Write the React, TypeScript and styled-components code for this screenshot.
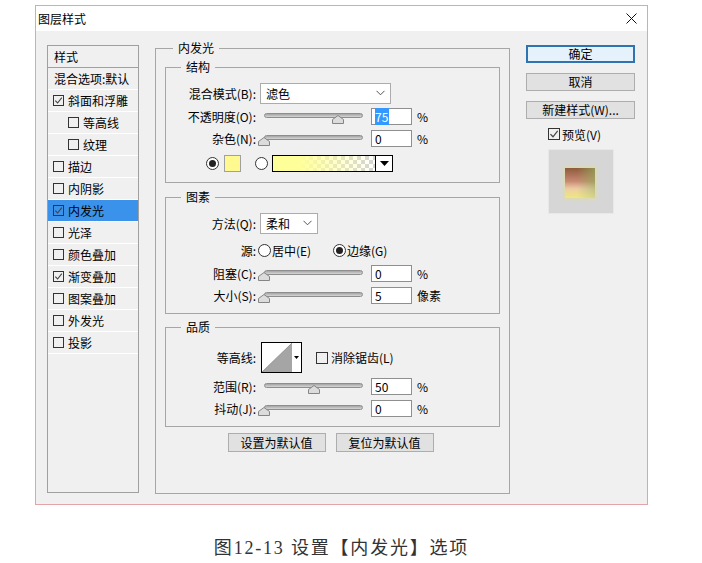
import React from "react";
import styled, { createGlobalStyle, css } from "styled-components";

const Global = createGlobalStyle`
  html, body { margin: 0; padding: 0; background: #fff; }
  body {
    font-family: "Noto Sans CJK SC", "Microsoft YaHei", sans-serif;
    font-size: 12px;
    color: #000;
  }
`;

const Page = styled.div`
  padding: 5px 0 0 35px;
  width: 613px;
`;

const Dialog = styled.div`
  width: 613px;
  height: 500px;
  box-sizing: border-box;
  border: 1px solid #e2a4a8;
  background: #f0f0f0;
  display: flex;
  flex-direction: column;
`;

const TitleBar = styled.div`
  height: 25px;
  flex: none;
  background: #fff;
  display: flex;
  align-items: center;
  justify-content: space-between;
  padding: 0 10px 0 2px;
`;

const TitleText = styled.span`
  font-size: 12px;
  line-height: 14px;
`;

const Body = styled.div`
  flex: 1;
  display: flex;
  align-items: flex-start;
  padding: 10px 0 0 11px;
`;

const StyleList = styled.div`
  flex: none;
  margin-top: 4px;
  width: 92px;
  height: 448px;
  box-sizing: border-box;
  border: 1px solid #a0a0a0;
`;

const ListItem = styled.div<{ $indent?: boolean; $selected?: boolean; $header?: boolean; $plain?: boolean }>`
  height: 22px;
  box-sizing: border-box;
  display: flex;
  align-items: center;
  gap: 4px;
  white-space: nowrap;
  border-bottom: 1px solid ${(p) => (p.$header ? "#a0a0a0" : "#ffffff")};
  padding-left: ${(p) => (p.$indent ? 20 : p.$header || p.$plain ? 6 : 5)}px;
  background: ${(p) => (p.$selected ? "#3a92ea" : "transparent")};
`;

const CheckBox = styled.span<{ $size?: number }>`
  flex: none;
  width: ${(p) => p.$size ?? 11}px;
  height: ${(p) => p.$size ?? 11}px;
  box-sizing: border-box;
  border: 1px solid #333;
  background: transparent;
  display: flex;
  align-items: center;
  justify-content: center;
`;

const Middle = styled.div`
  flex: none;
  margin-left: 16px;
  width: 355px;
`;

const Group = styled.fieldset<{ $outer?: boolean; $mt?: number }>`
  margin: ${(p) => (p.$outer ? "0" : `${p.$mt ?? 0}px 9px 0 9px`)};
  padding: ${(p) => (p.$outer ? "5px 0 0 0" : "8px 0 7px 0")};
  border: 1px solid #a6a6a6;
  min-inline-size: 0;
  box-sizing: border-box;
  ${(p) =>
    p.$outer &&
    css`
      height: 453px;
    `}
`;

const Legend = styled.legend<{ $outer?: boolean }>`
  margin-left: ${(p) => (p.$outer ? 17 : 15)}px;
  padding: 0 5px;
  font-size: 12px;
  line-height: 14px;
`;

const Row = styled.div<{ $h: number; $mt?: number; $pl?: number }>`
  height: ${(p) => p.$h}px;
  margin-top: ${(p) => p.$mt ?? 0}px;
  padding-left: ${(p) => p.$pl ?? 0}px;
  display: flex;
  align-items: center;
  white-space: nowrap;
`;

const Label = styled.span`
  flex: none;
  width: 90px;
  text-align: right;
`;

const Combo = styled.div<{ $w: number }>`
  flex: none;
  margin-left: 4px;
  width: ${(p) => p.$w}px;
  height: 21px;
  box-sizing: border-box;
  border: 1px solid #acacac;
  background: #fff;
  display: flex;
  align-items: center;
  justify-content: space-between;
  padding: 0 5px 0 5px;
`;

const SliderBox = styled.div`
  position: relative;
  flex: none;
  margin-left: 8px;
  margin-top: 5px;
  width: 99px;
  height: 11px;
`;

const Track = styled.div`
  height: 5px;
  box-sizing: border-box;
  border-radius: 3px;
  border: 1px solid #8e8e8e;
  background: linear-gradient(#a4a4a4, #d6d6d6);
`;

const Thumb = styled.svg`
  position: absolute;
  top: 2px;
`;

const NumBox = styled.div`
  flex: none;
  margin-left: 8px;
  width: 41px;
  height: 17px;
  box-sizing: border-box;
  border: 1px solid #8f8f8f;
  background: #fff;
  display: flex;
  align-items: center;
  padding-left: 3px;
`;

const Selected = styled.span`
  background: #3399ff;
  color: #fff;
  padding: 0 1px 0 0;
`;

const Unit = styled.span`
  margin-left: 5px;
`;

const Radio = styled.span<{ $on?: boolean; $ml?: number }>`
  flex: none;
  margin-left: ${(p) => p.$ml ?? 0}px;
  width: 13px;
  height: 13px;
  box-sizing: border-box;
  border: 1px solid #333;
  border-radius: 50%;
  background: #fff;
  display: flex;
  align-items: center;
  justify-content: center;
  &::after {
    content: "";
    display: ${(p) => (p.$on ? "block" : "none")};
    width: 7px;
    height: 7px;
    border-radius: 50%;
    background: #222;
  }
`;

const RadioOption = styled.span<{ $w?: number; $ml?: number }>`
  display: flex;
  align-items: center;
  gap: 1px;
  margin-left: ${(p) => p.$ml ?? 0}px;
  width: ${(p) => (p.$w ? `${p.$w}px` : "auto")};
`;

const Swatch = styled.span`
  flex: none;
  margin-left: 5px;
  width: 17px;
  height: 17px;
  box-sizing: border-box;
  border: 1px solid #a0a0a0;
  background: #fff98f;
`;

const GradientPicker = styled.div`
  flex: none;
  margin-left: 4px;
  width: 121px;
  height: 17px;
  box-sizing: border-box;
  border: 1px solid #000;
  display: flex;
`;

const GradientFill = styled.div`
  flex: 1;
  background-color: #fff;
  background-image: linear-gradient(to right, #ffff99 0%, #ffff99 25%, rgba(255, 255, 153, 0) 100%),
    linear-gradient(45deg, #d4d4d4 25%, transparent 25%, transparent 75%, #d4d4d4 75%),
    linear-gradient(45deg, #d4d4d4 25%, transparent 25%, transparent 75%, #d4d4d4 75%);
  background-size: 100% 100%, 8px 8px, 8px 8px;
  background-position: 0 0, 0 0, 4px 4px;
`;

const DropPart = styled.div`
  flex: none;
  width: 16px;
  border-left: 1px solid #000;
  background: #fff;
  display: flex;
  align-items: center;
  justify-content: center;
`;

const ContourPicker = styled.div`
  flex: none;
  margin-left: 5px;
  width: 41px;
  height: 31px;
  box-sizing: border-box;
  border: 1px solid #000;
  background: #fff;
  display: flex;
`;

const ContourArrow = styled.div`
  flex: 1;
  display: flex;
  align-items: center;
  justify-content: center;
`;

const InlineCheck = styled.span<{ $ml: number }>`
  display: flex;
  align-items: center;
  gap: 3px;
  margin-left: ${(p) => p.$ml}px;
`;

const ButtonRow = styled.div`
  display: flex;
  justify-content: center;
  gap: 10px;
  margin-top: 6px;
  padding-right: 4px;
`;

const PushButton = styled.button<{ $w?: number; $h?: number; $default?: boolean }>`
  flex: none;
  width: ${(p) => p.$w ?? 109}px;
  height: ${(p) => p.$h ?? 18}px;
  box-sizing: border-box;
  margin: 0;
  padding: 0;
  border: 1px solid #adadad;
  background: #e1e1e1;
  font-family: inherit;
  font-size: 12px;
  line-height: 14px;
  color: #000;
  white-space: nowrap;
  ${(p) =>
    p.$default &&
    css`
      border: 2px solid #2f74b0;
      background: #e5f1fb;
    `}
`;

const RightCol = styled.div`
  flex: none;
  margin-left: 16px;
  margin-top: 4px;
  width: 109px;
  display: flex;
  flex-direction: column;
  gap: 10px;
`;

const PreviewCheck = styled.div`
  display: flex;
  align-items: center;
  gap: 2px;
  height: 18px;
  margin-top: -4px;
  padding-left: 22px;
`;

const PreviewBox = styled.div`
  margin-top: -4px;
  margin-left: 22px;
  width: 66px;
  height: 65px;
  box-sizing: border-box;
  border: 1px solid #e8e8e8;
  background: #d6d6d6;
  padding: 18px 0 0 16px;
`;

const PreviewSwatch = styled.div`
  width: 30px;
  height: 30px;
  background: linear-gradient(to bottom, rgba(255, 255, 255, 0) 0%, rgba(255, 255, 255, 0) 45%, rgba(248, 232, 200, 0.55) 100%),
    linear-gradient(to right, rgba(140, 80, 50, 0) 40%, rgba(150, 170, 90, 0.7) 100%),
    linear-gradient(to bottom, #8e5a3c 0%, #c98a74 45%, #e8c49a 70%, #e6e238 100%);
  box-shadow: 0 0 3px 1px rgba(230, 225, 120, 0.6);
  filter: blur(0.4px);
`;

const Caption = styled.div`
  margin-top: 33px;
  width: 613px;
  text-align: center;
  font-family: "Liberation Serif", "Noto Sans CJK SC", serif;
  font-size: 18px;
  line-height: 20px;
  letter-spacing: 1.8px;
  color: #333;
`;

const CheckMark = ({ size = 9 }: { size?: number }) => (
  <svg width={size} height={size} viewBox="0 0 9 9">
    <path d="M1.3 4.6 L3.6 7 L7.8 1.6" fill="none" stroke="#444" strokeWidth="1.1" />
  </svg>
);

const Chevron = () => (
  <svg width="9" height="6" viewBox="0 0 9 6">
    <path d="M0.5 0.8 L4.5 4.8 L8.5 0.8" fill="none" stroke="#555" strokeWidth="1" />
  </svg>
);

const DownTriangle = ({ w = 9, h = 5 }: { w?: number; h?: number }) => (
  <svg width={w} height={h} viewBox={`0 0 ${w} ${h}`}>
    <polygon points={`0,0 ${w},0 ${w / 2},${h}`} fill="#000" />
  </svg>
);

const Slider = ({ value }: { value: number }) => (
  <SliderBox>
    <Track />
    <Thumb width={12} height={9} viewBox="0 0 12 9" style={{ left: value * 99 - 6 }}>
      <path d="M6 0.5 L11.5 4.5 L11.5 8.5 L0.5 8.5 L0.5 4.5 Z" fill="#dcdcdc" stroke="#858585" />
    </Thumb>
  </SliderBox>
);

type Item = { label: string; checked?: boolean; indent?: boolean; selected?: boolean; plain?: boolean };

const items: Item[] = [
  { label: "混合选项:默认", plain: true },
  { label: "斜面和浮雕", checked: true },
  { label: "等高线", indent: true },
  { label: "纹理", indent: true },
  { label: "描边" },
  { label: "内阴影" },
  { label: "内发光", checked: true, selected: true },
  { label: "光泽" },
  { label: "颜色叠加" },
  { label: "渐变叠加", checked: true },
  { label: "图案叠加" },
  { label: "外发光" },
  { label: "投影" },
];

const SliderRow = ({ label, value, text, unit, mt }: { label: string; value: number; text: React.ReactNode; unit: string; mt?: number }) => (
  <Row $h={22} $mt={mt}>
    <Label>{label}</Label>
    <Slider value={value} />
    <NumBox>{text}</NumBox>
    <Unit>{unit}</Unit>
  </Row>
);

export default function App() {
  return (
    <>
      <Global />
      <Page>
        <Dialog>
          <TitleBar>
            <TitleText>图层样式</TitleText>
            <svg width="11" height="11" viewBox="0 0 11 11">
              <path d="M0.5 0.5 L10.5 10.5 M10.5 0.5 L0.5 10.5" stroke="#111" strokeWidth="1" />
            </svg>
          </TitleBar>
          <Body>
            <StyleList>
              <ListItem $header>样式</ListItem>
              {items.map((it) => (
                <ListItem key={it.label} $indent={it.indent} $selected={it.selected} $plain={it.plain}>
                  {!it.plain && <CheckBox>{it.checked && <CheckMark />}</CheckBox>}
                  <span>{it.label}</span>
                </ListItem>
              ))}
            </StyleList>

            <Middle>
              <Group $outer>
                <Legend $outer>内发光</Legend>
                <Group>
                  <Legend>结构</Legend>
                  <Row $h={22}>
                    <Label>混合模式(B):</Label>
                    <Combo $w={131}>
                      <span>滤色</span>
                      <Chevron />
                    </Combo>
                  </Row>
                  <SliderRow label="不透明度(O):" value={0.75} text={<Selected>75</Selected>} unit="%" mt={1} />
                  <SliderRow label="杂色(N):" value={0} text="0" unit="%" />
                  <Row $h={24} $mt={2} $pl={40}>
                    <Radio $on />
                    <Swatch />
                    <Radio $ml={14} />
                    <GradientPicker>
                      <GradientFill />
                      <DropPart>
                        <DownTriangle w={9} h={5} />
                      </DropPart>
                    </GradientPicker>
                  </Row>
                </Group>

                <Group $mt={7}>
                  <Legend>图素</Legend>
                  <Row $h={22}>
                    <Label>方法(Q):</Label>
                    <Combo $w={58}>
                      <span>柔和</span>
                      <Chevron />
                    </Combo>
                  </Row>
                  <Row $h={22} $mt={5}>
                    <Label>源:</Label>
                    <RadioOption $w={75} $ml={2}>
                      <Radio />
                      <span>居中(E)</span>
                    </RadioOption>
                    <RadioOption>
                      <Radio $on />
                      <span>边缘(G)</span>
                    </RadioOption>
                  </Row>
                  <SliderRow label="阻塞(C):" value={0} text="0" unit="%" mt={1} />
                  <SliderRow label="大小(S):" value={0} text="5" unit="像素" />
                </Group>

                <Group $mt={6}>
                  <Legend>品质</Legend>
                  <Row $h={31}>
                    <Label>等高线:</Label>
                    <ContourPicker>
                      <svg width="30" height="29" viewBox="0 0 30 29">
                        <polygon points="0,29 30,0 30,29" fill="#a5a5a5" />
                        <line x1="0" y1="29" x2="30" y2="0" stroke="#8a8a8a" strokeWidth="0.8" />
                      </svg>
                      <ContourArrow>
                        <DownTriangle w={5} h={3} />
                      </ContourArrow>
                    </ContourPicker>
                    <InlineCheck $ml={14}>
                      <CheckBox $size={12} />
                      <span>消除锯齿(L)</span>
                    </InlineCheck>
                  </Row>
                  <SliderRow label="范围(R):" value={0.5} text="50" unit="%" mt={2} />
                  <SliderRow label="抖动(J):" value={0} text="0" unit="%" />
                </Group>

                <ButtonRow>
                  <PushButton $w={98} $h={19}>设置为默认值</PushButton>
                  <PushButton $w={98} $h={19}>复位为默认值</PushButton>
                </ButtonRow>
              </Group>
            </Middle>

            <RightCol>
              <PushButton $default>确定</PushButton>
              <PushButton>取消</PushButton>
              <PushButton>新建样式(W)...</PushButton>
              <PreviewCheck>
                <CheckBox $size={12}>
                  <CheckMark size={10} />
                </CheckBox>
                <span>预览(V)</span>
              </PreviewCheck>
              <PreviewBox>
                <PreviewSwatch />
              </PreviewBox>
            </RightCol>
          </Body>
        </Dialog>
        <Caption>图12-13 设置【内发光】选项</Caption>
      </Page>
    </>
  );
}
